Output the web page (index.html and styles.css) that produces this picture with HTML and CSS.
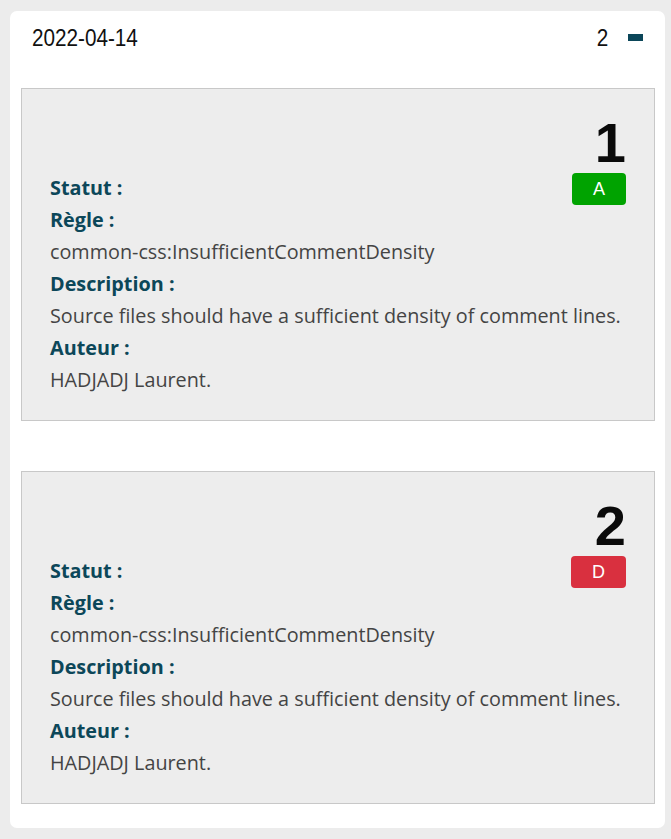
FILE: index.html
```html
<!DOCTYPE html>
<html lang="fr">
<head>
<meta charset="utf-8">
<title>Audit</title>
<link rel="stylesheet" href="styles.css">
</head>
<body>
<div class="card">
  <div class="card-header">
    <span class="date">2022-04-14</span>
    <div class="header-right">
      <span class="count">2</span>
      <span class="collapse-icon"></span>
    </div>
  </div>
  <div class="list">
    <div class="item">
      <div class="item-num">1</div>
      <div class="row row-status">
        <span class="label">Statut :</span>
        <span class="badge badge-a">A</span>
      </div>
      <div class="row label">Règle :</div>
      <div class="row value">common-css:InsufficientCommentDensity</div>
      <div class="row label">Description :</div>
      <div class="row value">Source files should have a sufficient density of comment lines.</div>
      <div class="row label">Auteur :</div>
      <div class="row value">HADJADJ Laurent.</div>
    </div>
    <div class="item">
      <div class="item-num">2</div>
      <div class="row row-status">
        <span class="label">Statut :</span>
        <span class="badge badge-d">D</span>
      </div>
      <div class="row label">Règle :</div>
      <div class="row value">common-css:InsufficientCommentDensity</div>
      <div class="row label">Description :</div>
      <div class="row value">Source files should have a sufficient density of comment lines.</div>
      <div class="row label">Auteur :</div>
      <div class="row value">HADJADJ Laurent.</div>
    </div>
  </div>
</div>
</body>
</html>
```
FILE: styles.css
```css
html, body {
  margin: 0;
  padding: 0;
  background: #ececec;
}
body {
  padding: 11px 6px 10px 10px;
  font-family: "Open Sans", "Liberation Sans", sans-serif;
}
.card {
  background: #ffffff;
  border-radius: 7px;
  padding: 0 10px 24px 11px;
}
.card-header {
  height: 54px;
  display: flex;
  align-items: center;
  justify-content: space-between;
  padding: 0 12px 0 11px;
}
.date {
  display: inline-block;
  font-family: "Liberation Sans", Arial, sans-serif;
  font-size: 23px;
  color: #111;
  transform: scaleX(0.9);
  transform-origin: left center;
}
.header-right {
  display: flex;
  align-items: center;
  gap: 19px;
}
.count {
  display: inline-block;
  font-family: "Liberation Sans", Arial, sans-serif;
  font-size: 23px;
  color: #111;
  transform: scaleX(0.9);
}
.collapse-icon {
  display: block;
  width: 15px;
  height: 7px;
  background: #0b4659;
  margin-top: -2px;
}
.list {
  margin-top: 23px;
  display: flex;
  flex-direction: column;
  gap: 50px;
}
.item {
  background: #ededed;
  border: 1px solid #c8c8c8;
  padding: 26px 28px 24px 28px;
}
.item-num {
  font-family: "Liberation Sans", Arial, sans-serif;
  font-weight: bold;
  font-size: 56px;
  line-height: 56px;
  text-align: right;
  color: #0a0a0a;
}
.row {
  height: 32px;
  line-height: 32px;
  font-size: 19.8px;
  white-space: nowrap;
}
.row-status {
  display: flex;
  justify-content: space-between;
  align-items: flex-start;
  margin-top: 1px;
}
.label {
  font-weight: bold;
  color: #0c4759;
}
.value {
  color: #444444;
}
.badge {
  display: block;
  height: 32px;
  line-height: 32px;
  padding: 0 21px;
  margin-top: 1px;
  border-radius: 4px;
  font-family: "Liberation Sans", Arial, sans-serif;
  font-size: 18px;
  font-weight: normal;
  color: #ffffff;
}
.badge-a {
  background: #00a300;
}
.badge-d {
  background: #d9303f;
}
```
